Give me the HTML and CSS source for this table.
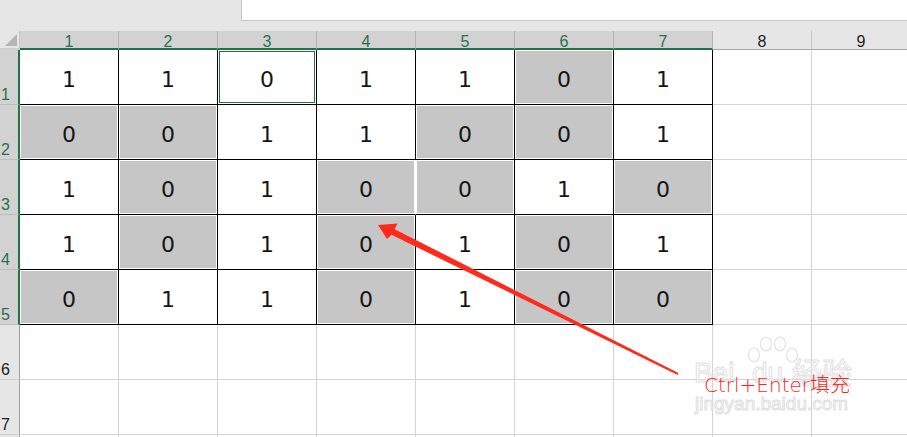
FILE: index.html
```html
<!DOCTYPE html>
<html>
<head>
<meta charset="utf-8">
<link rel="stylesheet" href="styles.css">
</head>
<body>
<div class="top"><div class="formula"></div></div>
<div class="sheet">
  <div class="corner"><span class="tri"></span></div>
  <div class="ch sel">1</div><div class="ch sel">2</div><div class="ch sel">3</div><div class="ch sel">4</div><div class="ch sel">5</div><div class="ch sel">6</div><div class="ch sel">7</div><div class="ch">8</div><div class="ch">9</div>

  <div class="rh sel">1</div>
  <div class="c d">1</div><div class="c d">1</div><div class="c d active">0</div><div class="c d">1</div><div class="c d">1</div><div class="c d g">0</div><div class="c d">1</div><div class="c"></div><div class="c"></div>

  <div class="rh sel">2</div>
  <div class="c d g">0</div><div class="c d g">0</div><div class="c d">1</div><div class="c d">1</div><div class="c d g">0</div><div class="c d g">0</div><div class="c d">1</div><div class="c"></div><div class="c"></div>

  <div class="rh sel">3</div>
  <div class="c d">1</div><div class="c d g">0</div><div class="c d">1</div><div class="c d g open-r">0</div><div class="c d g">0</div><div class="c d">1</div><div class="c d g">0</div><div class="c"></div><div class="c"></div>

  <div class="rh sel">4</div>
  <div class="c d">1</div><div class="c d g">0</div><div class="c d">1</div><div class="c d g">0</div><div class="c d">1</div><div class="c d g">0</div><div class="c d">1</div><div class="c"></div><div class="c"></div>

  <div class="rh sel">5</div>
  <div class="c d g">0</div><div class="c d">1</div><div class="c d">1</div><div class="c d g">0</div><div class="c d">1</div><div class="c d g">0</div><div class="c d g">0</div><div class="c"></div><div class="c"></div>

  <div class="rh">6</div>
  <div class="c"></div><div class="c"></div><div class="c"></div><div class="c"></div><div class="c"></div><div class="c"></div><div class="c"></div><div class="c"></div><div class="c"></div>

  <div class="rh">7</div>
  <div class="c"></div><div class="c"></div><div class="c"></div><div class="c"></div><div class="c"></div><div class="c"></div><div class="c"></div><div class="c"></div><div class="c"></div>

  <div class="rh"></div>
  <div class="c"></div><div class="c"></div><div class="c"></div><div class="c"></div><div class="c"></div><div class="c"></div><div class="c"></div><div class="c"></div><div class="c"></div>
</div>

<div class="wm">
  <span class="wm-bai">Bai</span>
  <svg class="wm-paw" width="54" height="38" viewBox="0 0 54 38">
    <g fill="none" stroke="#e2e2e2" stroke-width="1.2">
      <ellipse cx="8" cy="19" rx="5.5" ry="7"/>
      <ellipse cx="20" cy="8" rx="5.5" ry="7"/>
      <ellipse cx="34" cy="8" rx="5.5" ry="7"/>
      <ellipse cx="46" cy="19" rx="5.5" ry="7"/>
    </g>
  </svg>
  <span class="wm-du">du</span>
  <span class="wm-jy">经验</span>
  <span class="wm-url">jingyan.baidu.com</span>
</div>

<svg class="arrow" width="907" height="437" viewBox="0 0 907 437">
  <polygon fill="#ff2a1c" points="378,225 387,239 391.5,234.8 677.6,374.9 678.4,373.1 394.6,229.2 397.5,223.5"/>
</svg>

<div class="note">Ctrl+Enter填充</div>
</body>
</html>
```

FILE: styles.css
```css
* { box-sizing: border-box; }

html, body {
  margin: 0;
  padding: 0;
}

body {
  width: 907px;
  height: 437px;
  overflow: hidden;
  position: relative;
  background: #ffffff;
  font-family: "Liberation Sans", Arial, sans-serif;
}

.top {
  height: 31px;
  background: #e6e6e6;
  display: flex;
}

.formula {
  margin-left: 241px;
  flex: 1;
  height: 21px;
  background: #ffffff;
  border-left: 1px solid #c6c6c6;
  border-bottom: 1px solid #c6c6c6;
}

.sheet {
  display: grid;
  grid-template-columns: 20px repeat(9, 99px);
  grid-template-rows: 19px repeat(8, 55px);
  width: 911px;
}

.corner {
  background: #e6e6e6;
  border-right: 1px solid #c4c4c4;
  border-bottom: 2px solid #cfcfcf;
  position: relative;
}

.tri {
  position: absolute;
  left: 5px;
  top: 3px;
  width: 0;
  height: 0;
  border-left: 12px solid transparent;
  border-bottom: 12px solid #b5b5b5;
}

.ch {
  background: #e6e6e6;
  border-right: 1px solid #c4c4c4;
  border-bottom: 1px solid #a6a6a6;
  font-size: 16px;
  line-height: 16px;
  padding-top: 3px;
  text-align: center;
  color: #222222;
}

.ch.sel {
  background: #d2d2d2;
  border-right-color: #b3b3b3;
  border-bottom: 2px solid #217346;
  color: #2a6f4e;
}

.rh {
  background: #e6e6e6;
  border-right: 1px solid #9f9f9f;
  border-bottom: 1px solid #cfcfcf;
  font-size: 16px;
  line-height: 16px;
  padding-left: 1px;
  padding-bottom: 1px;
  display: flex;
  align-items: flex-end;
  color: #222222;
}

.rh.sel {
  background: #d2d2d2;
  border-right: 2px solid #217346;
  border-bottom-color: #bdbdbd;
  color: #2a6f4e;
}

.c {
  border-right: 1px solid #d4d4d4;
  border-bottom: 1px solid #d4d4d4;
  display: flex;
  align-items: center;
  justify-content: center;
  padding-top: 4px;
  font-family: "DejaVu Sans", sans-serif;
  font-size: 22px;
  color: #151515;
}

.c.d {
  border-right-color: #000000;
  border-bottom-color: #000000;
}

.c.g {
  background: #c6c6c6;
  box-shadow: inset 0 0 0 1px #ffffff;
}

.c.open-r {
  border-right-color: #ffffff;
}

.c.active {
  box-shadow: inset 0 0 0 1px #ffffff, inset 0 0 0 2px #217346;
}

.arrow {
  position: absolute;
  left: 0;
  top: 0;
  pointer-events: none;
}

.note {
  position: absolute;
  left: 704px;
  top: 373px;
  line-height: 24px;
  font-family: "DejaVu Sans", "Noto Sans CJK SC", sans-serif;
  font-weight: 200;
  font-size: 20px;
  color: #ff1f1f;
  white-space: nowrap;
}

.wm {
  position: absolute;
  left: 0;
  top: 0;
  width: 907px;
  height: 437px;
  pointer-events: none;
  color: rgba(255, 255, 255, 0.3);
}

.wm span {
  position: absolute;
  white-space: nowrap;
  -webkit-text-stroke: 1px #e0e0e0;
}

.wm-bai {
  left: 694px;
  top: 359px;
  font-size: 28px;
  line-height: 28px;
}

.wm-paw {
  position: absolute;
  left: 746px;
  top: 336px;
}

.wm-du {
  left: 752px;
  top: 359px;
  font-size: 28px;
  line-height: 28px;
}

.wm-jy {
  left: 792px;
  top: 355px;
  font-family: "Noto Sans CJK SC", sans-serif;
  font-size: 30px;
  line-height: 32px;
}

.wm-url {
  left: 695px;
  top: 393px;
  font-size: 19px;
  line-height: 22px;
}
```
